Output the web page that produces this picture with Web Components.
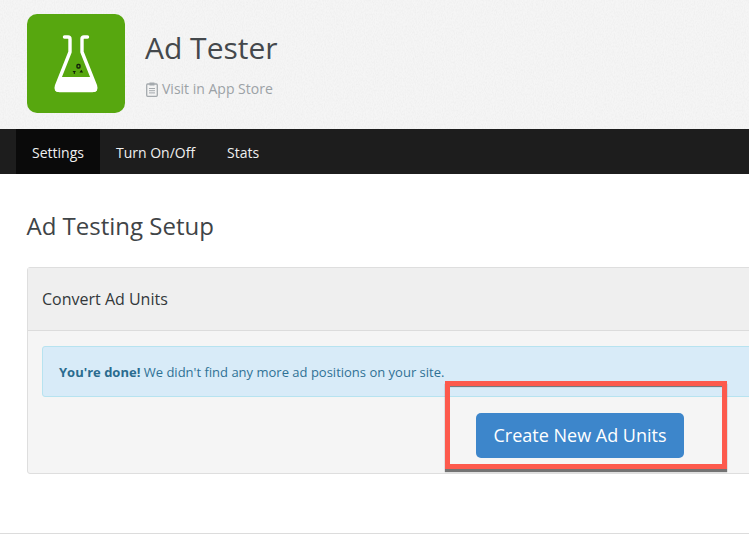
<!DOCTYPE html>
<html>
<head>
<meta charset="utf-8">
<title>Ad Tester</title>
<style>
  html, body { margin: 0; padding: 0; width: 749px; height: 535px; overflow: hidden; background: #fff; }
  body { font-family: "Open Sans", sans-serif; }
</style>
</head>
<body>
<app-page>
  <app-header slot="header" name="Ad Tester" link="Visit in App Store"></app-header>
  <app-nav slot="nav">
    <nav-tab active>Settings</nav-tab>
    <nav-tab>Turn On/Off</nav-tab>
    <nav-tab>Stats</nav-tab>
  </app-nav>
  <setup-panel title-text="Convert Ad Units">
    <info-alert><b>You're done!</b> We didn't find any more ad positions on your site.</info-alert>
    <big-button>Create New Ad Units</big-button>
  </setup-panel>
</app-page>

<script>
class AppPage extends HTMLElement {
  constructor() {
    super();
    this.attachShadow({ mode: "open" });
    this.shadowRoot.innerHTML = `
      <style>
        :host { display: block; width: 749px; height: 535px; overflow: hidden; position: relative; box-sizing: border-box; }
        main { padding: 0 0 0 27px; }
        h1 { margin: 0 0 0 -0.5px; padding-top: 35px; height: 58px; font-size: 24px; line-height: 33px; font-weight: 400; color: #3f4447; }
        .rule { position: absolute; left: 0; right: 0; top: 533px; height: 1px; background: #dcdcdc; }
      </style>
      <slot name="header"></slot>
      <slot name="nav"></slot>
      <main>
        <h1>Ad Testing Setup</h1>
        <slot></slot>
      </main>
      <div class="rule"></div>
    `;
  }
}

class AppHeader extends HTMLElement {
  constructor() {
    super();
    this.attachShadow({ mode: "open" });
    this.shadowRoot.innerHTML = `
      <style>
        :host { display: flex; position: relative; height: 129px; box-sizing: border-box; padding: 14px 0 0 27px; gap: 20px; background: #f5f5f5; }
        .grain { position: absolute; left: 0; top: 0; width: 100%; height: 100%; }
        .logo { position: relative; width: 98px; height: 99px; flex: none; }
        .info { position: relative; padding-top: 14px; }
        h2 { margin: 0; font-size: 30px; line-height: 40px; font-weight: 400; color: #44484c; }
        a { display: flex; align-items: center; gap: 4px; margin-top: 11px; margin-left: 1px; font-size: 14px; line-height: 20px; color: #9ca2a6; }
      </style>
      <svg class="grain">
        <filter id="g">
          <feTurbulence type="fractalNoise" baseFrequency="0.9 0.5" numOctaves="2" seed="4"/>
          <feColorMatrix values="0 0 0 0 0.5  0 0 0 0 0.5  0 0 0 0 0.5  0.22 0 0 0 -0.08"/>
        </filter>
        <rect width="100%" height="100%" filter="url(#g)"/>
      </svg>
      <svg class="logo" viewBox="0 0 98 99">
        <rect width="98" height="99" rx="10" fill="#57a70f"/>
        <path d="M37.500 23 H41 Q43 23 43 25 V38 L29.500 72 Q28 76.500 32.500 76.500 H65.500 Q70 76.500 68.500 72 L55 38 V25 Q55 23 57 23 H60.500" fill="none" stroke="#fff" stroke-width="3.400" stroke-linecap="round" stroke-linejoin="round"/>
        <path d="M32.500 63 H65.500 L70 74 Q71 78 66 78 H32 Q27 78 28 74 Z" fill="#fff"/>
        <rect x="50" y="50.500" width="3" height="3.500" rx="1" fill="none" stroke="#14200a" stroke-width="1.400"/>
        <path d="M45.500 57 h3.500 l-1.200 1.500 v1.500 h-1 v-1.500 z M52.500 58.500 l1.800 -2.700 l1.800 2.700 z" fill="#14200a"/>
      </svg>
      <div class="info">
        <h2></h2>
        <a>
          <svg width="12" height="15" viewBox="0 0 12 15">
            <rect x="0.700" y="2" width="10.600" height="12.300" rx="1" fill="none" stroke="#a4a9ad" stroke-width="1.300"/>
            <rect x="3.500" y="0.500" width="5" height="3" fill="#a4a9ad"/>
            <path d="M3 6.500 H9 M3 8.700 H9 M3 10.900 H9" stroke="#a4a9ad" stroke-width="1"/>
          </svg>
          <span></span>
        </a>
      </div>
    `;
  }

  connectedCallback() {
    this.shadowRoot.querySelector("h2").textContent = this.getAttribute("name");
    this.shadowRoot.querySelector("span").textContent = this.getAttribute("link");
  }
}

class AppNav extends HTMLElement {
  constructor() {
    super();
    this.attachShadow({ mode: "open" });
    this.shadowRoot.innerHTML = `
      <style>
        :host { display: flex; height: 45px; padding-left: 16px; background: #1d1d1d; }
      </style>
      <slot></slot>
    `;
  }
}

class NavTab extends HTMLElement {
  constructor() {
    super();
    this.attachShadow({ mode: "open" });
    this.shadowRoot.innerHTML = `
      <style>
        :host { display: block; padding: 0 16px; font-size: 14px; font-weight: 400; line-height: 48px; height: 45px; color: #f0f0f0; }
        :host([active]) { background: #0a0a0a; }
      </style>
      <slot></slot>
    `;
  }
}

class SetupPanel extends HTMLElement {
  constructor() {
    super();
    this.attachShadow({ mode: "open" });
    this.shadowRoot.innerHTML = `
      <style>
        :host { display: block; width: 780px; height: 207px; box-sizing: border-box; background: #f5f5f5; border: 1px solid #dedede; border-radius: 3px; }
        header { height: 63px; box-sizing: border-box; padding-left: 14px; font-size: 16px; line-height: 62px; color: #33383b; background: #efefef; border-bottom: 1px solid #dcdcdc; }
        .body { padding: 15px 15px 0 14px; }
      </style>
      <header></header>
      <div class="body"><slot></slot></div>
    `;
  }

  connectedCallback() {
    this.shadowRoot.querySelector("header").textContent = this.getAttribute("title-text");
  }
}

class InfoAlert extends HTMLElement {
  constructor() {
    super();
    this.attachShadow({ mode: "open" });
    this.shadowRoot.innerHTML = `
      <style>
        :host { display: block; height: 51px; box-sizing: border-box; padding: 0 16px; border: 1px solid #b7e3f0; border-radius: 3px; background: #d8ebf8; color: #2f7195; font-size: 13px; line-height: 50px; white-space: nowrap; }
        ::slotted(b) { font-weight: 700; color: #2a6c8f; }
      </style>
      <slot></slot>
    `;
  }
}

class BigButton extends HTMLElement {
  constructor() {
    super();
    this.attachShadow({ mode: "open" });
    this.shadowRoot.innerHTML = `
      <style>
        :host { display: block; position: relative; margin: 16px 0 0 434px; width: 208px; height: 45px; }
        button { display: block; width: 208px; height: 45px; padding: 0; border: 0; border-radius: 5px; background: #3d86cb; color: #fff; font-family: inherit; font-size: 18px; line-height: 45px; }
        /* red annotation drawn over the screenshot */
        .mark { position: absolute; left: -31px; top: -32px; width: 282px; height: 88px; box-sizing: border-box; border: 5px solid #fd5a4d; box-shadow: 0 3px 1px rgba(60,60,60,.7), inset 0 2px 1px -1px rgba(60,60,60,.7); }
      </style>
      <button><slot></slot></button>
      <div class="mark"></div>
    `;
  }
}

customElements.define("app-page", AppPage);
customElements.define("app-header", AppHeader);
customElements.define("app-nav", AppNav);
customElements.define("nav-tab", NavTab);
customElements.define("setup-panel", SetupPanel);
customElements.define("info-alert", InfoAlert);
customElements.define("big-button", BigButton);
</script>
</body>
</html>
